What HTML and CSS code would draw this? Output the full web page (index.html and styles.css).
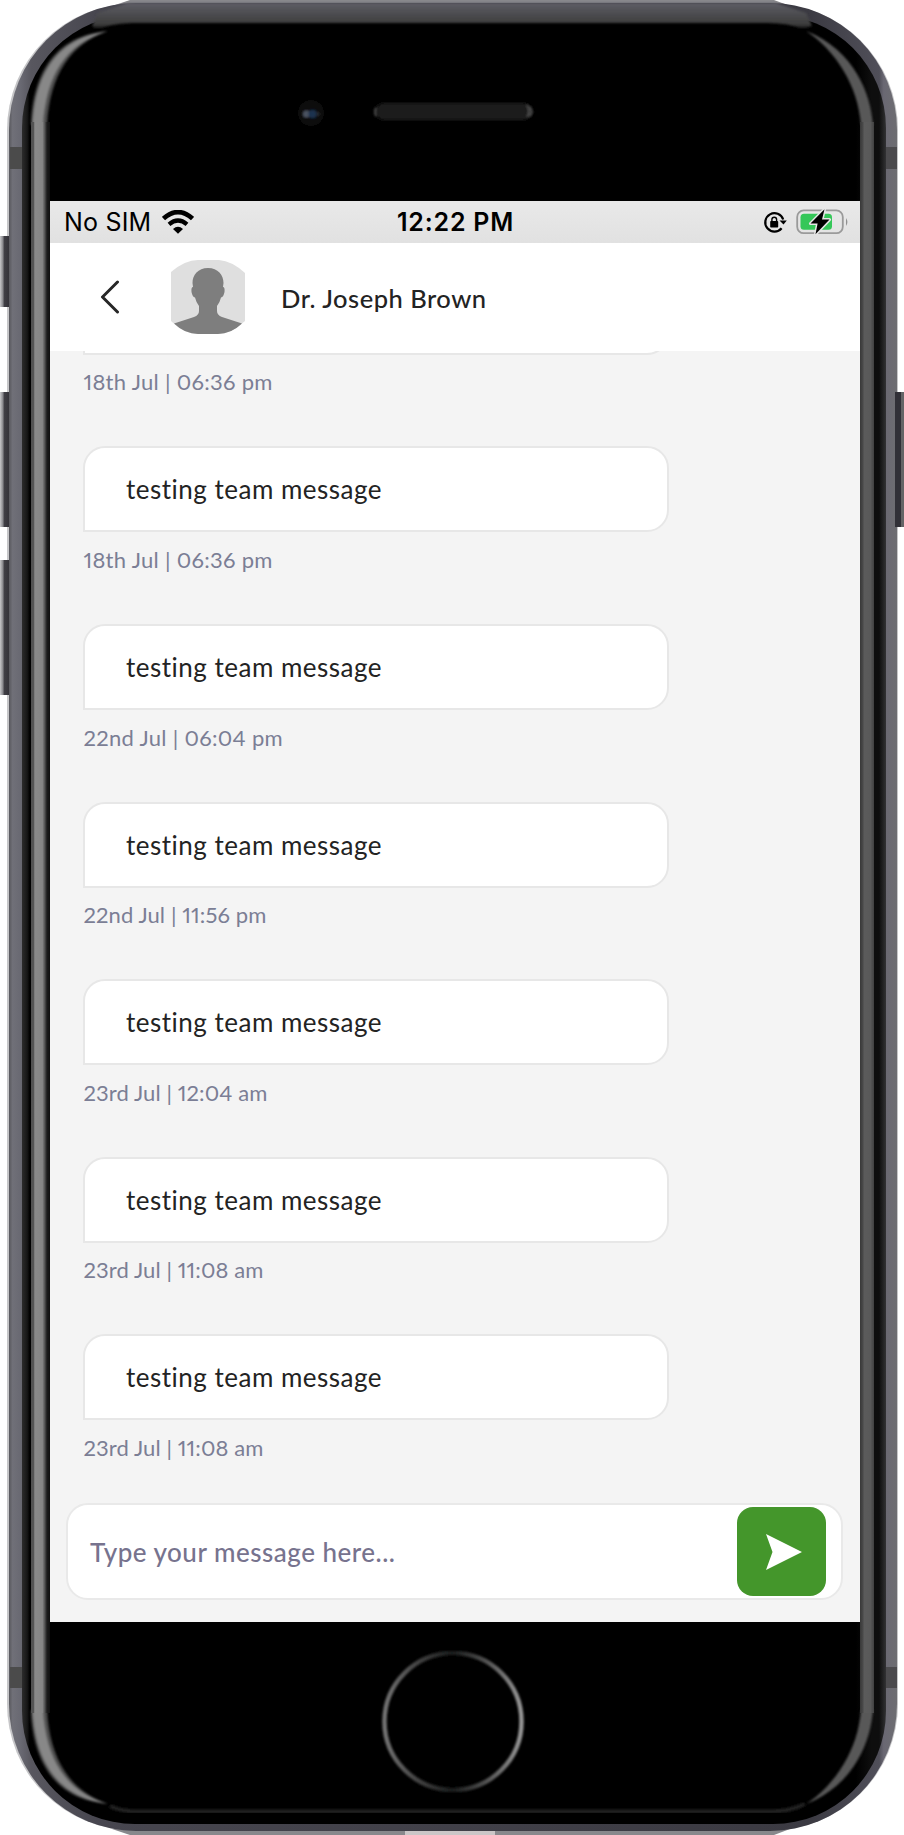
FILE: index.html
```html
<!DOCTYPE html>
<html lang="en">
<head>
<meta charset="utf-8">
<title>Dr. Joseph Brown</title>
<link rel="stylesheet" href="styles.css">
</head>
<body>
<div class="phone">
  <svg class="shell" width="904" height="1835" viewBox="0 0 904 1835" aria-hidden="true">
    <defs>
      <linearGradient id="rim" x1="0" x2="1" y1="0" y2="0">
        <stop offset="0" stop-color="#58585d"/><stop offset=".004" stop-color="#707078"/><stop offset=".013" stop-color="#696972"/><stop offset=".025" stop-color="#58575f"/>
        <stop offset=".1" stop-color="#47464f"/><stop offset=".9" stop-color="#3b3a42"/>
        <stop offset=".98" stop-color="#504f59"/><stop offset=".985" stop-color="#6a6873"/><stop offset="1" stop-color="#6d6d71"/>
      </linearGradient>
      <linearGradient id="bezel" x1="0" x2="1" y1="0" y2="0">
        <stop offset="0" stop-color="#2c2c2c"/><stop offset=".006" stop-color="#171717"/><stop offset=".009" stop-color="#000"/>
        <stop offset=".965" stop-color="#000"/><stop offset=".983" stop-color="#0e0e0e"/><stop offset=".992" stop-color="#0e0e0e"/><stop offset="1" stop-color="#323234"/>
      </linearGradient>
      <linearGradient id="topedge" x1="0" x2="0" y1="0" y2="1">
        <stop offset="0" stop-color="#5e5d66"/><stop offset=".3" stop-color="#515155"/><stop offset=".8" stop-color="#3c3c3c"/><stop offset="1" stop-color="#000"/>
      </linearGradient>
      <linearGradient id="glintL" gradientUnits="userSpaceOnUse" x1="31" x2="50" y1="0" y2="0">
        <stop offset="0" stop-color="#505050"/><stop offset=".14" stop-color="#555"/><stop offset=".2" stop-color="#8a8a8a"/><stop offset=".6" stop-color="#868686"/><stop offset=".72" stop-color="#555"/><stop offset=".84" stop-color="#1c1c1c"/><stop offset="1" stop-color="#101010"/>
      </linearGradient>
      <linearGradient id="glintR" gradientUnits="userSpaceOnUse" x1="860" x2="874" y1="0" y2="0">
        <stop offset="0" stop-color="#383838"/><stop offset=".2" stop-color="#484848"/><stop offset=".3" stop-color="#5b5b5b"/><stop offset=".75" stop-color="#595959"/><stop offset="1" stop-color="#414141"/>
      </linearGradient>
      <linearGradient id="key" x1="0" x2="1" y1="0" y2="0">
        <stop offset="0" stop-color="#c8c8ca"/><stop offset=".25" stop-color="#8a8a8e"/><stop offset=".4" stop-color="#3f3e44"/><stop offset="1" stop-color="#2f2e34"/>
      </linearGradient>
      <linearGradient id="home" gradientUnits="userSpaceOnUse" x1="382" x2="523" y1="0" y2="0">
        <stop offset="0" stop-color="#777"/><stop offset=".25" stop-color="#444"/><stop offset=".5" stop-color="#181a1a"/><stop offset=".75" stop-color="#555"/><stop offset="1" stop-color="#999"/>
      </linearGradient>
      <filter id="soft" x="-20%" y="-20%" width="140%" height="140%"><feGaussianBlur stdDeviation=".8"/></filter>
      <g id="corners">
        <path d="M31 125C32 90 44 36 108 31C70 44 50 75 47 125Z" fill="#505050"/>
        <path d="M33 125C34 92 46 40 105 32C66 44 46 75 43 125Z" fill="#888"/>
        <path d="M873 125C871 95 855 50 806 31C835 50 858 85 861 125Z" fill="#585858"/>
      </g>
    </defs>

    <rect x="7" y="4" width="891" height="1826" rx="126" fill="#c6c6c8"/>
    <rect x="0" y="236" width="11" height="71" fill="url(#key)"/>
    <rect x="0" y="392" width="11" height="135" fill="url(#key)"/>
    <rect x="0" y="560" width="11" height="135" fill="url(#key)"/>
    <path d="M130 0H774L790 6H112ZM130 1835H774L790 1829H112Z" fill="#88888c"/>
    <path d="M405 1830H495V1835H405Z" fill="#cbc6c7"/>
    <rect x="9" y="3" width="888" height="1828" rx="127" fill="url(#rim)"/>
    <rect x="895" y="392" width="6" height="135" fill="#313037"/>
    <rect x="901" y="392" width="3" height="135" fill="#646466"/>
    <rect x="10" y="147" width="12" height="22" fill="#4b4b4b"/>
    <rect x="886" y="147" width="11" height="22" fill="#4b4a4d"/>
    <rect x="10" y="1667" width="12" height="21" fill="#4b4b4b"/>
    <rect x="886" y="1667" width="11" height="21" fill="#4b4a4d"/>
    <rect x="22" y="15" width="864" height="1809" rx="113" fill="url(#bezel)"/>
    <path d="M128 3H776L806 13L812 26L803 29Q788 23 768 23H132Q108 24 97 30L92 26L98 13Z" fill="url(#topedge)" filter="url(#soft)"/>
    <path d="M110 1806Q120 1811.500 140 1811.500H770Q790 1811.500 805 1804" fill="none" stroke="#242424" stroke-width="4" filter="url(#soft)"/>

    <g filter="url(#soft)">
      <use href="#corners"/>
      <use href="#corners" transform="matrix(1 0 0 -1 0 1835)"/>
    </g>
    <path d="M31 122H50V1713H31Z" fill="url(#glintL)"/>
    <path d="M860 122H874V1713H860Z" fill="url(#glintR)"/>

    <g filter="url(#soft)">
      <circle cx="311" cy="113" r="13" fill="#0b0b0b"/>
      <circle cx="306.500" cy="114" r="3.500" fill="#4c5260"/>
      <circle cx="312.500" cy="114" r="4" fill="#1c3150"/>
      <circle cx="317.500" cy="114" r="2" fill="#282b30"/>
      <rect x="374" y="102" width="159" height="19" rx="9.500" fill="#0e0e0e"/>
      <rect x="377" y="104" width="153" height="15" rx="7.500" fill="#1c1c1c"/>
      <path d="M376 108Q374 112 376 116M527 105Q531 112 527 117M530 107L532 112L530 116" fill="none" stroke="#4a4a4a" stroke-width="2"/>
    </g>
    <circle cx="453" cy="1721.500" r="68.500" fill="none" stroke="url(#home)" stroke-width="4.500" filter="url(#soft)"/>
  </svg>

  <main class="screen">
    <div class="status">
      <span class="carrier">No SIM</span>
      <svg class="wifi" width="32" height="24" viewBox="0 0 32 24">
        <path d="M1.500 8.600Q16-4.400 30.500 8.600" fill="none" stroke="#000" stroke-width="4.600"/>
        <path d="M7 14.400Q16 6.600 25 14.400" fill="none" stroke="#000" stroke-width="4.200"/>
        <path d="M11 19Q16 14.600 21 19L16 23.800Z"/>
      </svg>
      <span class="clock">12:22 PM</span>
      <svg class="lock" width="24" height="24" viewBox="0 0 24 24">
        <path d="M18.600 18.200A9.200 9.200 0 1 1 20.200 9.500" fill="none" stroke="#000" stroke-width="2.200"/>
        <path d="M16.500 10.500H23.800L20.500 14.600Z"/>
        <rect x="7.200" y="11" width="8" height="6.600" rx=".8"/>
        <path d="M8.900 11V9.600A2.350 2.350 0 0 1 13.600 9.600V11" fill="none" stroke="#000" stroke-width="1.400"/>
      </svg>
      <svg class="battery" width="52" height="26" viewBox="0 0 52 26">
        <rect x="1.200" y="1.400" width="45.600" height="22.800" rx="6.500" fill="none" stroke="#9a9a9a" stroke-width="1.800"/>
        <path d="M50 9Q52.800 13 50 17Z" fill="#909090"/>
        <rect x="4.500" y="4.800" width="31.500" height="16" rx="3.500" fill="#35c759"/>
        <path d="M28.500 .3L14.500 14.600H21.600L19.500 25.300L33.500 10.600H26Z" fill="#000" stroke="#e6e6e6" stroke-width="3" stroke-linejoin="round" paint-order="stroke"/>
      </svg>
    </div>

    <header class="header">
      <svg class="back" width="20" height="34" viewBox="0 0 20 34"><path d="M17.500 2L2.500 17L17.500 32" fill="none" stroke="#272727" stroke-width="3" stroke-linecap="round" stroke-linejoin="round"/></svg>
      <svg class="avatar" width="74" height="74" viewBox="0 0 74 74">
        <path d="M0 12Q14 0 27 0H48Q61 1 74 13V61Q60 74 47 74H27Q13 74 0 61Z" fill="#dfdfdf"/>
        <path d="M37 8C27 8 21.500 15 21.500 23L22 27Q20 27 20.500 32Q21.500 37 24 37.500Q25 42 28 46V51Q28 55 23 57L3 63.500Q14 74 27 74H47Q60 74 71 63.500L51 57Q46 55 46 51V46Q49 42 50 37.500Q52.500 37 53.500 32Q54 27 52 27L52.500 23C52.500 15 47 8 37 8Z" fill="#7e7e7e"/>
      </svg>
      <h1 class="name">Dr. Joseph Brown</h1>
    </header>

    <section class="chat">
      <article class="message"><p class="bubble"></p><time class="stamp">18th Jul | 06:36 pm</time></article>
      <article class="message"><p class="bubble">testing team message</p><time class="stamp">18th Jul | 06:36 pm</time></article>
      <article class="message"><p class="bubble">testing team message</p><time class="stamp">22nd Jul | 06:04 pm</time></article>
      <article class="message"><p class="bubble">testing team message</p><time class="stamp stamp-snug">22nd Jul | 11:56 pm</time></article>
      <article class="message"><p class="bubble">testing team message</p><time class="stamp stamp-snug">23rd Jul | 12:04 am</time></article>
      <article class="message"><p class="bubble">testing team message</p><time class="stamp stamp-snug">23rd Jul | 11:08 am</time></article>
      <article class="message"><p class="bubble">testing team message</p><time class="stamp stamp-snug">23rd Jul | 11:08 am</time></article>
    </section>

    <div class="composer">
      <span class="placeholder">Type your message here...</span>
      <button class="send" aria-label="Send">
        <svg width="36" height="36" viewBox="0 0 36 36"><path d="M0 0L36 18L0 36L6.500 18Z" fill="#fff"/></svg>
      </button>
    </div>
  </main>
</div>
</body>
</html>
```
FILE: styles.css
```css
* { box-sizing: border-box; }
body { margin: 0; background: #fff; font-family: Lato, sans-serif; color: #232323; }
.phone { position: relative; width: 904px; height: 1835px; padding: 201px 44px 213px 50px; overflow: hidden; }
.shell { position: absolute; left: 0; top: 0; }
.screen { position: relative; display: flex; flex-direction: column; width: 810px; height: 1421px; background: #f4f4f4; }
.status { display: flex; align-items: center; height: 42px; padding: 0 12px 0 14px; background: linear-gradient(#e9e9e9, #e1e1e1); font-family: Inter, sans-serif; color: #000; }
.carrier { width: 98px; font-size: 25px; line-height: 42px; letter-spacing: .2px; white-space: nowrap; }
.clock { margin-left: 203px; width: 124px; font-size: 25px; font-weight: 600; line-height: 42px; letter-spacing: .8px; white-space: nowrap; }
.lock { margin-left: auto; }
.battery { margin-left: 9px; }
.header { display: flex; align-items: center; height: 108px; padding: 0 50px; background: #fff; }
.avatar { margin-left: 51px; }
.name { margin: 1px 0 0 36px; font-size: 25.500px; font-weight: 500; line-height: 32px; letter-spacing: .5px; white-space: nowrap; }
.chat { flex: 1; min-height: 0; display: flex; flex-direction: column; justify-content: flex-end; gap: 51.600px; padding: 0 33.400px 42.600px; overflow: hidden; }
.message { flex: none; height: 126px; }
.bubble { display: flex; align-items: center; width: 586px; height: 86px; margin: 0; padding: 0 40.600px; border: 2px solid #e7e7e7; border-radius: 22px 22px 22px 0; background: #fff; font-size: 26px; letter-spacing: .5px; }
.stamp { display: block; margin-top: 13.500px; font-size: 22px; line-height: 28px; letter-spacing: .3px; font-variant-numeric: proportional-nums; color: #7b7e95; white-space: nowrap; }
.stamp-snug { letter-spacing: .1px; }
.composer { flex: none; display: flex; align-items: center; justify-content: space-between; height: 97px; margin: 0 17px 22px 16px; padding: 0 15px 0 22px; border: 2px solid #e9e9e9; border-radius: 22px; background: #fff; }
.placeholder { font-size: 26px; font-weight: 500; letter-spacing: .5px; color: #77738e; }
.send { display: flex; align-items: center; justify-content: center; width: 89px; height: 89px; padding: 0 0 0 4px; border: 0; border-radius: 16px; background: #44962b; }
```
